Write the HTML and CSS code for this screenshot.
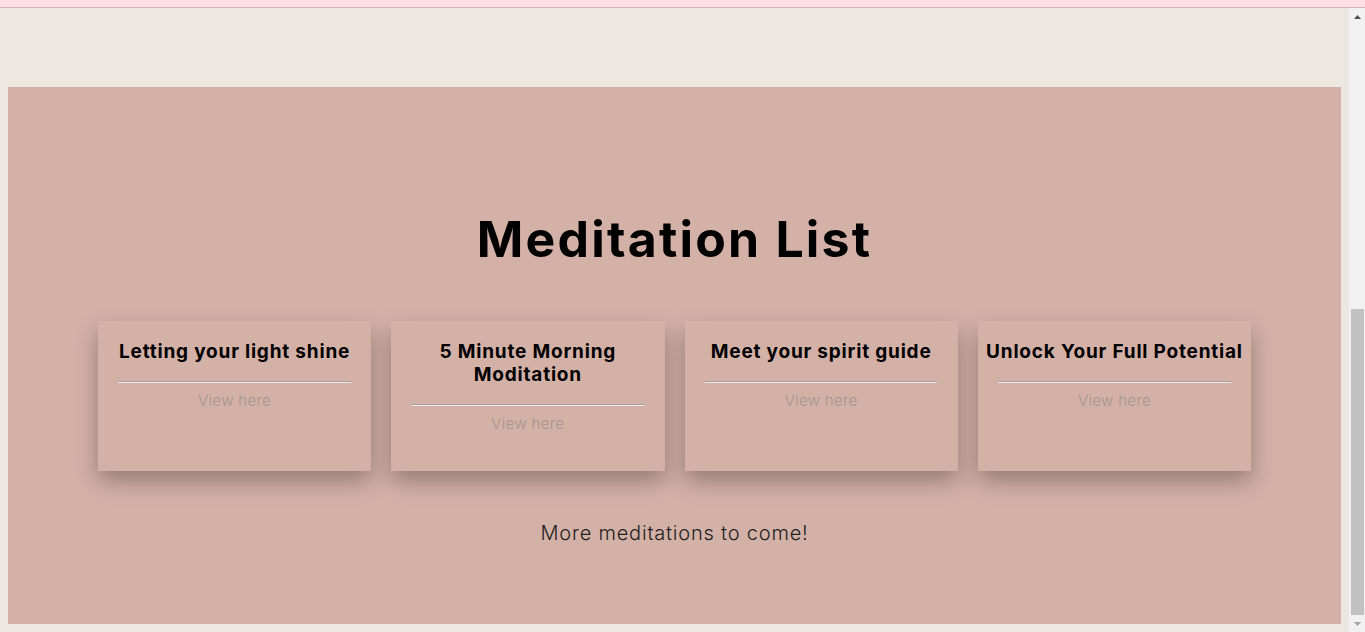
FILE: index.html
```html
<!DOCTYPE html>
<html lang="en">
<head>
<meta charset="utf-8">
<title>Meditation List</title>
<link rel="stylesheet" href="styles.css">
</head>
<body>
<div class="topbar"></div>
<div class="frame">
  <main class="viewport">
    <section class="meditations">
      <h1 class="meditations-title">Meditation List</h1>
      <div class="cards">
        <div class="card">
          <h3 class="card-title">Letting your light shine</h3>
          <hr class="card-rule">
          <p class="card-link">View here</p>
        </div>
        <div class="card">
          <h3 class="card-title">5 Minute Morning Moditation</h3>
          <hr class="card-rule">
          <p class="card-link">View here</p>
        </div>
        <div class="card">
          <h3 class="card-title">Meet your spirit guide</h3>
          <hr class="card-rule">
          <p class="card-link">View here</p>
        </div>
        <div class="card">
          <h3 class="card-title">Unlock Your Full Potential</h3>
          <hr class="card-rule">
          <p class="card-link">View here</p>
        </div>
      </div>
      <p class="more">More meditations to come!</p>
    </section>
  </main>
  <div class="scrollbar" aria-hidden="true">
    <div class="sb-btn">
      <svg width="7" height="4" viewBox="0 0 7 4"><path d="M3.5 0 L7 4 L0 4 Z" fill="#505050"/></svg>
    </div>
    <div class="sb-track">
      <div class="sb-thumb"></div>
    </div>
    <div class="sb-btn">
      <svg width="7" height="4" viewBox="0 0 7 4"><path d="M0 0 L7 0 L3.5 4 Z" fill="#a3a3a3"/></svg>
    </div>
  </div>
</div>
</body>
</html>
```

FILE: styles.css
```css
html, body {
  margin: 0;
  padding: 0;
}
body {
  height: 632px;
  overflow: hidden;
  display: flex;
  flex-direction: column;
  background: #ece8e1;
  font-family: Inter, "DejaVu Sans", sans-serif;
  color: #000;
}
.topbar {
  height: 7px;
  flex: none;
  background: #fddfe4;
  border-bottom: 1px solid #d3b2b6;
}
.frame {
  flex: 1;
  display: flex;
  min-height: 0;
}
.viewport {
  flex: 1;
  padding: 79px 8px 8px;
}
.meditations {
  background: #d4b1a7;
  padding: 122px 0 79px;
  text-align: center;
}
.meditations-title {
  margin: 0;
  font-size: 50px;
  line-height: 60px;
  font-weight: 700;
  letter-spacing: 2.2px;
}
.cards {
  display: flex;
  justify-content: center;
  gap: 20px;
  margin-top: 52px;
}
.card {
  width: 273.3px;
  height: 150px;
  box-sizing: border-box;
  padding: 19px 0 0;
  background: #d4b1a7;
  box-shadow: 0 10px 22px rgba(0, 0, 0, 0.3);
}
.card-title {
  margin: 0;
  padding: 0 6px;
  font-size: 19px;
  line-height: 23px;
  font-weight: 650;
  letter-spacing: 0.8px;
}
.card-rule {
  width: 85%;
  margin: 18px auto 0;
  border: 0;
  border-top: 1px solid #a5a09e;
  border-bottom: 1px solid #eeeeee;
  height: 0;
}
.card-link {
  margin: 8px 0 0;
  font-size: 15px;
  line-height: 20px;
  font-weight: 300;
  letter-spacing: 0.35px;
  color: #a3958f;
}
.more {
  margin: 50px 0 0;
  font-size: 20px;
  line-height: 24px;
  font-weight: 300;
  letter-spacing: 0.8px;
  color: #222;
}
.scrollbar {
  width: 16px;
  flex: none;
  display: flex;
  flex-direction: column;
  background: #f1f1f1;
}
.sb-btn {
  height: 17px;
  flex: none;
  display: flex;
  align-items: center;
  justify-content: center;
  padding-left: 1px;
}
.sb-btn svg {
  display: block;
}
.sb-track {
  flex: 1;
  display: flex;
  flex-direction: column;
  justify-content: flex-end;
}
.sb-thumb {
  height: 306px;
  margin: 0 1px 0 2px;
  background: #c1c1c1;
}
```
